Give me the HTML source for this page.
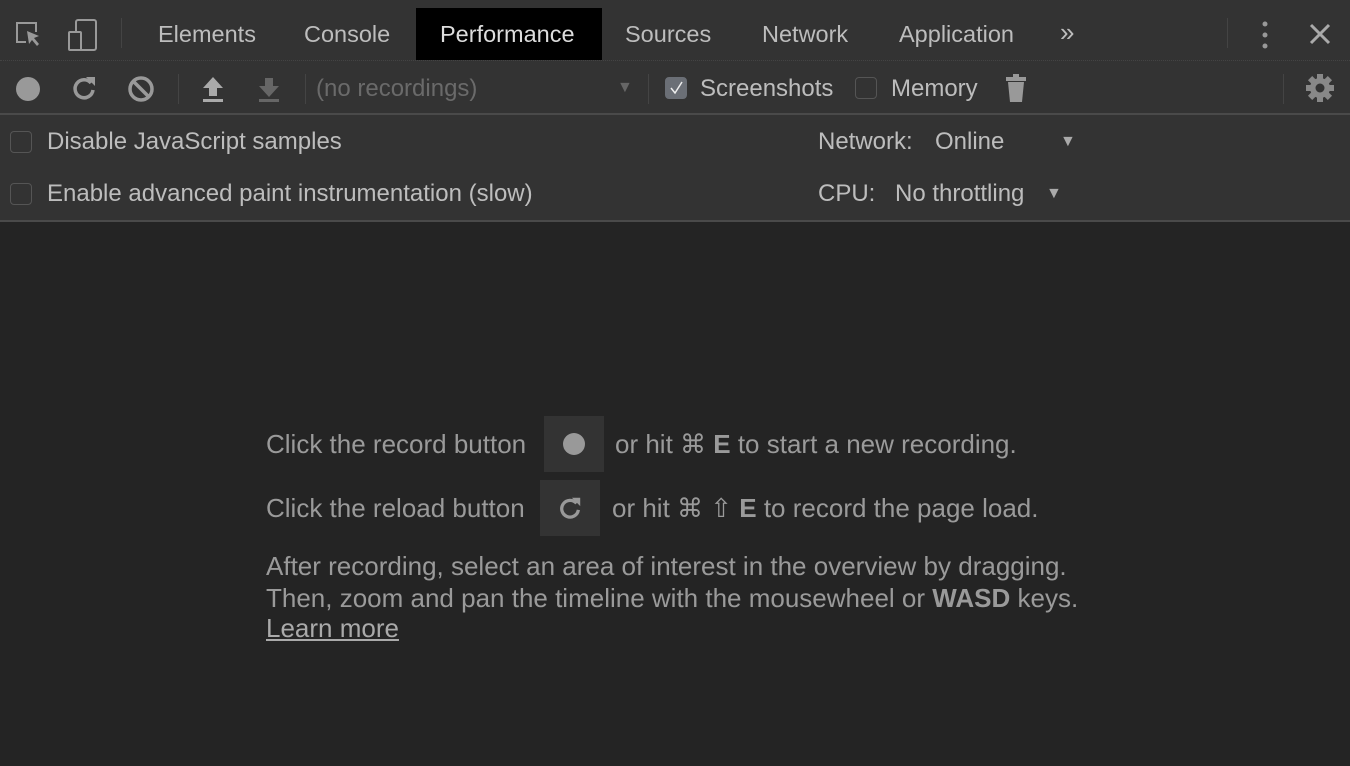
<!DOCTYPE html>
<html><head><meta charset="utf-8"><style>
*{margin:0;padding:0;box-sizing:border-box}
body{width:1350px;height:766px;background:#242424;font-family:"Liberation Sans",Arial,sans-serif;overflow:hidden;position:relative;color:#bdbdbd}
.a{position:absolute;white-space:nowrap}
.bar1{position:absolute;left:0;top:0;width:1350px;height:61px;background:#333;border-bottom:1px dotted #444}
.bar2{position:absolute;left:0;top:61px;width:1350px;height:54px;background:#333;border-bottom:2px solid #4a4a4a}
.bar3{position:absolute;left:0;top:115px;width:1350px;height:107px;background:#333;border-bottom:2px solid #4a4a4a}
.tab{font-size:23.5px;top:21px;color:#bdbdbd}
.cb{position:absolute;width:22px;height:22px;border:1px solid #555;border-radius:4px}
.sep{position:absolute;width:1px;background:#444}
.t{font-size:26px;color:#9a9a9a}
.o{font-size:24px}
.btn{position:absolute;background:#333}
</style></head><body>
<div class="bar1"></div>
<div class="bar2"></div>
<div class="bar3"></div>
<svg class="a" style="left:14px;top:20px" width="32" height="32" viewBox="0 0 32 32"><path d="M12 22H3V3h19v9" fill="none" stroke="#999" stroke-width="2"/><path d="M13 11l12 5-5 2 5 6-2 2-5-6-3 4z" fill="#999"/></svg>
<svg class="a" style="left:66px;top:18px" width="34" height="34" viewBox="0 0 34 34"><rect x="10" y="2" width="20" height="30" rx="2" fill="none" stroke="#999" stroke-width="2"/><rect x="3" y="14" width="12" height="18" rx="1" fill="#333" stroke="#999" stroke-width="2"/></svg>
<div class="sep" style="left:121px;top:18px;height:30px"></div>
<div class="a tab" style="left:158px">Elements</div>
<div class="a tab" style="left:304px">Console</div>
<div class="a" style="left:416px;top:8px;width:186px;height:52px;background:#000"></div>
<div class="a tab" style="left:440px;color:#ddd">Performance</div>
<div class="a tab" style="left:625px">Sources</div>
<div class="a tab" style="left:762px">Network</div>
<div class="a tab" style="left:899px">Application</div>
<div class="a tab" style="left:1060px;font-size:26px;top:17px">»</div>
<div class="sep" style="left:1227px;top:18px;height:30px"></div>
<svg class="a" style="left:1258px;top:20px" width="14" height="30"><circle cx="7" cy="4" r="2.5" fill="#999"/><circle cx="7" cy="15" r="2.5" fill="#999"/><circle cx="7" cy="26" r="2.5" fill="#999"/></svg>
<svg class="a" style="left:1309px;top:23px" width="22" height="22"><path d="M2 2L20 20M20 2L2 20" stroke="#aaa" stroke-width="3"/></svg>
<svg class="a" style="left:14px;top:75px" width="28" height="28"><circle cx="14" cy="14" r="12" fill="#999"/></svg>
<svg class="a" style="left:70px;top:74px" width="28" height="28" viewBox="0 0 28 28"><path d="M21 9A9 9 0 1 0 23 16" fill="none" stroke="#999" stroke-width="3.5"/><path d="M16 3h9v9z" fill="#999"/></svg>
<svg class="a" style="left:126px;top:74px" width="30" height="30" viewBox="0 0 30 30"><circle cx="15" cy="15" r="11" fill="none" stroke="#999" stroke-width="3.5"/><path d="M8 8l14 14" stroke="#999" stroke-width="3.5"/></svg>
<div class="sep" style="left:178px;top:74px;height:30px"></div>
<svg class="a" style="left:201px;top:75px" width="24" height="28" viewBox="0 0 24 28"><path d="M12 2l10 11h-6v8H8v-8H2z" fill="#aaa"/><rect x="2" y="24" width="20" height="3" fill="#aaa"/></svg>
<svg class="a" style="left:257px;top:75px" width="24" height="28" viewBox="0 0 24 28"><path d="M12 22L2 11h6V3h8v8h6z" fill="#666"/><rect x="2" y="24" width="20" height="3" fill="#666"/></svg>
<div class="sep" style="left:305px;top:74px;height:30px"></div>
<div class="a o" style="left:316px;top:75px;color:#6a6a6a">(no recordings)</div>
<div class="a" style="left:617px;top:79px;font-size:16px;color:#666">▼</div>
<div class="sep" style="left:648px;top:74px;height:30px"></div>
<div class="cb" style="left:665px;top:77px;background:#6b6f76;border-color:#6b6f76"></div>
<svg class="a" style="left:668px;top:80px" width="16" height="16"><path d="M3 8l4 5 7-11" fill="none" stroke="#eee" stroke-width="1.5"/></svg>
<div class="a o" style="left:700px;top:75px">Screenshots</div>
<div class="cb" style="left:855px;top:77px"></div>
<div class="a o" style="left:891px;top:75px">Memory</div>
<svg class="a" style="left:1004px;top:73px" width="24" height="30" viewBox="0 0 24 30"><rect x="2" y="4" width="20" height="4" fill="#999"/><rect x="9" y="1" width="6" height="4" fill="#999"/><path d="M4 9h16l-2 20H6z" fill="#999"/></svg>
<div class="sep" style="left:1283px;top:74px;height:30px"></div>
<svg class="a" style="left:1304px;top:72px" width="32" height="32" viewBox="0 0 32 32"><g fill="#888"><circle cx="16" cy="16" r="10"/><rect x="13" y="2" width="6" height="28"/><rect x="2" y="13" width="28" height="6"/><rect x="13" y="2" width="6" height="28" transform="rotate(45 16 16)"/><rect x="13" y="2" width="6" height="28" transform="rotate(-45 16 16)"/></g><circle cx="16" cy="16" r="4.5" fill="#333"/></svg>
<div class="cb" style="left:10px;top:131px"></div>
<div class="a o" style="left:47px;top:128px">Disable JavaScript samples</div>
<div class="cb" style="left:10px;top:183px"></div>
<div class="a o" style="left:47px;top:180px">Enable advanced paint instrumentation (slow)</div>
<div class="a o" style="left:818px;top:128px">Network:</div>
<div class="a o" style="left:935px;top:128px">Online</div>
<div class="a" style="left:1060px;top:133px;font-size:16px;color:#aaa">▼</div>
<div class="a o" style="left:818px;top:180px">CPU:</div>
<div class="a o" style="left:895px;top:180px">No throttling</div>
<div class="a" style="left:1046px;top:185px;font-size:16px;color:#aaa">▼</div>
<div class="a t" style="left:266px;top:429px">Click the record button</div>
<div class="btn" style="left:544px;top:416px;width:60px;height:56px"></div>
<svg class="a" style="left:562px;top:432px" width="24" height="24"><circle cx="12" cy="12" r="11" fill="#999"/></svg>
<div class="a t" style="left:615px;top:429px">or hit ⌘ <b>E</b> to start a new recording.</div>
<div class="a t" style="left:266px;top:493px">Click the reload button</div>
<div class="btn" style="left:540px;top:480px;width:60px;height:56px"></div>
<svg class="a" style="left:557px;top:495px" width="26" height="26" viewBox="0 0 28 28"><path d="M21 9A9 9 0 1 0 23 16" fill="none" stroke="#999" stroke-width="3.5"/><path d="M16 3h9v9z" fill="#999"/></svg>
<div class="a t" style="left:612px;top:493px">or hit ⌘ ⇧ <b>E</b> to record the page load.</div>
<div class="a t" style="left:266px;top:551px">After recording, select an area of interest in the overview by dragging.</div>
<div class="a t" style="left:266px;top:583px">Then, zoom and pan the timeline with the mousewheel or <b>WASD</b> keys.</div>
<div class="a t" style="left:266px;top:613px;text-decoration:underline;color:#aaa">Learn more</div>
</body></html>
